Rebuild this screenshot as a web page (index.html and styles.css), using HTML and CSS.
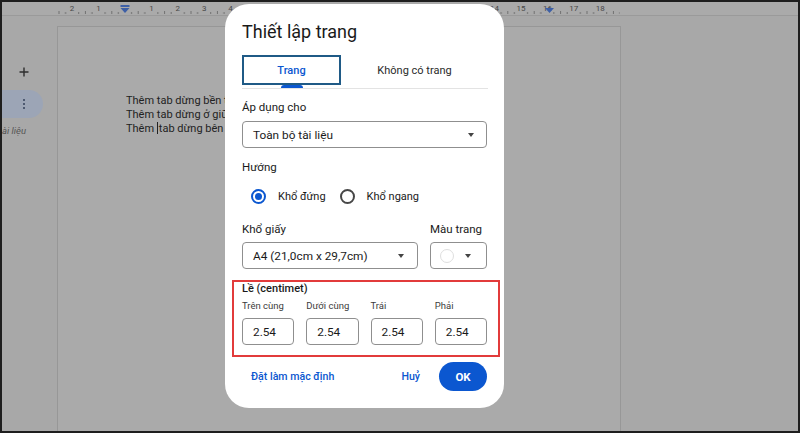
FILE: index.html
```html
<!DOCTYPE html>
<html lang="vi">
<head>
<meta charset="utf-8">
<title>Thiết lập trang</title>
<link rel="stylesheet" href="styles.css">
</head>
<body>
<div class="app">
  <div class="ruler">
    <svg class="ruler-svg" width="796" height="13" viewBox="0 0 796 13">
      <defs>
        <pattern id="tk" x="123" y="0" width="26.4" height="13" patternUnits="userSpaceOnUse">
          <rect x="6.1" y="10" width="0.9" height="2" fill="#6a6a6a"/>
          <rect x="12.7" y="9" width="0.9" height="3" fill="#6a6a6a"/>
          <rect x="19.3" y="10" width="0.9" height="2" fill="#6a6a6a"/>
        </pattern>
      </defs>
      <rect x="56" y="0" width="562" height="13" fill="url(#tk)"/>
      <g class="rnum">
        <text x="70" y="9">2</text>
        <text x="96.6" y="9">1</text>
        <text x="149.4" y="9">1</text>
        <text x="175.8" y="9">2</text>
        <text x="202.2" y="9">3</text>
        <text x="228.6" y="9">4</text>
        <text x="492.6" y="9">14</text>
        <text x="519" y="9">15</text>
        <text x="545.4" y="9">16</text>
        <text x="571.8" y="9">17</text>
        <text x="598.2" y="9">18</text>
      </g>
      <rect x="118.5" y="3" width="9" height="2" fill="#3d5fa6"/>
      <path d="M118.5 6 H127.5 L123 11 Z" fill="#3d5fa6"/>
      <path d="M543 6 H552 L547.5 11 Z" fill="#3d5fa6"/>
    </svg>
  </div>
  <div class="main">
    <aside class="sidebar">
      <svg class="plus" width="10" height="10" viewBox="0 0 10 10">
        <path d="M5 0.5 V9.5 M0.5 5 H9.5" stroke="#2e2e2e" stroke-width="1.4"/>
      </svg>
      <div class="pill">
        <span class="dots"><i></i><i></i><i></i></span>
      </div>
      <div class="side-label">ài liệu</div>
    </aside>
    <section class="page">
      <p class="doc-line">Thêm tab dừng bền trái</p>
      <p class="doc-line">Thêm tab dừng ở giữa</p>
      <p class="doc-line">Thêm <span class="caret-text"></span>tab dừng bên phải</p>
    </section>
  </div>
</div>

<div class="dialog">
  <h1 class="title">Thiết lập trang</h1>
  <div class="tabs">
    <div class="tab tab-active">
      <div class="tab-box">Trang</div>
      <i class="tab-ind"></i>
    </div>
    <div class="tab tab-other">Không có trang</div>
  </div>

  <div class="label l-apply">Áp dụng cho</div>
  <div class="select s-wide">
    <span>Toàn bộ tài liệu</span>
    <i class="caret"></i>
  </div>

  <div class="label l-orient">Hướng</div>
  <div class="radios">
    <span class="radio radio-on"></span>
    <span class="radio-text">Khổ đứng</span>
    <span class="radio radio-off"></span>
    <span class="radio-text">Khổ ngang</span>
  </div>

  <div class="pair-labels">
    <span class="label">Khổ giấy</span>
    <span class="label">Màu trang</span>
  </div>
  <div class="pair-selects">
    <div class="select s-paper">
      <span>A4 (21,0cm x 29,7cm)</span>
      <i class="caret"></i>
    </div>
    <div class="select s-color">
      <i class="swatch"></i>
      <i class="caret"></i>
    </div>
  </div>

  <div class="margins">
    <div class="m-title">Lề (centimet)</div>
    <div class="m-grid">
      <div class="m-col"><span class="m-label">Trên cùng</span><div class="m-input">2.54</div></div>
      <div class="m-col"><span class="m-label">Dưới cùng</span><div class="m-input">2.54</div></div>
      <div class="m-col"><span class="m-label">Trái</span><div class="m-input">2.54</div></div>
      <div class="m-col"><span class="m-label">Phải</span><div class="m-input">2.54</div></div>
    </div>
  </div>

  <div class="actions">
    <span class="btn-text btn-default">Đặt làm mặc định</span>
    <div class="actions-right">
      <span class="btn-text">Huỷ</span>
      <span class="btn-ok">OK</span>
    </div>
  </div>
</div>
</body>
</html>
```

FILE: styles.css
```css
* { box-sizing: border-box; }

html, body {
  margin: 0;
  padding: 0;
}

body {
  width: 800px;
  height: 433px;
  overflow: hidden;
  font-family: Roboto, "Liberation Sans", Arial, sans-serif;
  background: #1e1e1e;
}

.app {
  width: 800px;
  height: 433px;
  border: 2px solid #1e1e1e;
  background: #a8a8a8;
  overflow: hidden;
  display: flex;
  flex-direction: column;
}

.ruler {
  height: 14px;
  flex: none;
  background: #aaaaaa;
  border-bottom: 1px solid #9a9a9a;
}

.ruler-svg {
  display: block;
}

.rnum text {
  font-family: Roboto, "Liberation Sans", sans-serif;
  font-size: 8px;
  fill: #474747;
  text-anchor: middle;
}

.main {
  flex: 1;
  display: flex;
  min-height: 0;
}

.sidebar {
  width: 55px;
  flex: none;
  display: flex;
  flex-direction: column;
}

.plus {
  display: block;
  margin: 51px 0 0 17px;
}

.pill {
  margin-top: 13px;
  width: 41px;
  height: 28px;
  border-radius: 0 14px 14px 0;
  background: #9ca5b6;
  display: flex;
  align-items: center;
}

.dots {
  margin-left: 21px;
  display: flex;
  flex-direction: column;
  gap: 2px;
}

.dots i {
  display: block;
  width: 2px;
  height: 2px;
  border-radius: 1px;
  background: #34425a;
}

.side-label {
  margin-top: 7px;
  font-size: 9.5px;
  font-style: italic;
  color: #555;
  white-space: nowrap;
  line-height: 12px;
}

.page {
  width: 564px;
  flex: none;
  margin-top: 10px;
  border: 1px solid #979797;
  border-bottom: none;
  background: #aaaaaa;
  padding: 67px 0 0 68px;
}

.doc-line {
  margin: 0;
  font-size: 11px;
  line-height: 14px;
  color: #222;
  white-space: nowrap;
}

.caret-text {
  display: inline-block;
  width: 0;
  height: 12px;
  border-left: 1px solid #222;
  vertical-align: -2px;
  margin-right: 1px;
}

/* Dialog */
.dialog {
  position: absolute;
  left: 225px;
  top: 4px;
  width: 279px;
  height: 404px;
  background: #ffffff;
  border-radius: 24px;
  padding: 16px 17px 17px 17px;
  display: flex;
  flex-direction: column;
}

.title {
  margin: 0;
  font-size: 18px;
  font-weight: 400;
  line-height: 24px;
  color: #1a1a1a;
}

.tabs {
  margin-top: 11px;
  display: flex;
  border-bottom: 1px solid #e3e3e3;
  width: 246px;
}

.tab {
  display: flex;
  flex-direction: column;
  align-items: center;
}

.tab-active {
  width: 99px;
}

.tab-box {
  width: 99px;
  height: 30px;
  border: 2px solid #1f5a86;
  display: flex;
  align-items: center;
  justify-content: center;
  font-size: 11px;
  font-weight: 500;
  color: #0b57d0;
}

.tab-ind {
  display: block;
  width: 22px;
  height: 3px;
  border-radius: 3px 3px 0 0;
  background: #0b57d0;
}

.tab-other {
  width: 147px;
  height: 33px;
  padding-bottom: 3px;
  justify-content: center;
  font-size: 11px;
  color: #2a2a2a;
}

.label {
  font-size: 11.5px;
  line-height: 16px;
  color: #1a1a1a;
}

.l-apply {
  margin-top: 10px;
}

.select {
  height: 27px;
  border: 1px solid #8f8f8f;
  border-radius: 4px;
  display: flex;
  align-items: center;
  font-size: 11.8px;
  color: #1a1a1a;
}

.select span {
  padding-left: 10px;
  flex: 1;
}

.caret {
  display: block;
  width: 0;
  height: 0;
  border-left: 3.5px solid transparent;
  border-right: 3.5px solid transparent;
  border-top: 4px solid #444;
}

.s-wide {
  margin-top: 6px;
  width: 245px;
}

.s-wide .caret {
  margin-right: 12px;
}

.l-orient {
  margin-top: 11px;
}

.radios {
  margin-top: 11px;
  height: 20px;
  display: flex;
  align-items: center;
  padding-left: 9px;
}

.radio {
  width: 15px;
  height: 15px;
  border-radius: 50%;
  flex: none;
  display: flex;
  align-items: center;
  justify-content: center;
}

.radio-on {
  border: 2px solid #0b57d0;
}

.radio-on::after {
  content: "";
  width: 7px;
  height: 7px;
  border-radius: 50%;
  background: #0b57d0;
}

.radio-off {
  border: 2px solid #474747;
  margin-left: 14px;
}

.radio-text {
  margin-left: 12px;
  font-size: 11px;
  color: #1a1a1a;
}

.pair-labels {
  margin-top: 15px;
  display: grid;
  grid-template-columns: 176px 57px;
  column-gap: 12px;
}

.pair-selects {
  margin-top: 5px;
  display: grid;
  grid-template-columns: 176px 57px;
  column-gap: 12px;
}

.s-paper .caret {
  margin-right: 13px;
}

.s-color {
  padding-left: 9px;
}

.swatch {
  display: block;
  width: 14px;
  height: 14px;
  border-radius: 50%;
  border: 1px solid #dedede;
  margin-right: 11px;
}

.margins {
  margin: 11px -13px 0 -10px;
  height: 77px;
  border: 2px solid #e23b3b;
  padding: 0 11px 10px 8px;
  display: flex;
  flex-direction: column;
}

.m-title {
  font-size: 11px;
  font-weight: 500;
  line-height: 14px;
  color: #1a1a1a;
}

.m-grid {
  margin-top: 3px;
  display: grid;
  grid-template-columns: repeat(4, 1fr);
  column-gap: 12px;
}

.m-col {
  display: flex;
  flex-direction: column;
}

.m-label {
  font-size: 9.5px;
  line-height: 14px;
  color: #3c3c3c;
}

.m-input {
  margin-top: 5px;
  height: 27px;
  border: 1px solid #8f8f8f;
  border-radius: 4px;
  display: flex;
  align-items: center;
  padding-left: 10px;
  font-size: 11.8px;
  color: #1a1a1a;
}

.actions {
  margin-top: 5px;
  height: 29px;
  display: flex;
  align-items: center;
  justify-content: space-between;
}

.btn-text {
  font-size: 10.6px;
  font-weight: 500;
  color: #0b57d0;
}

.btn-default {
  padding-left: 9px;
}

.actions-right {
  display: flex;
  align-items: center;
  gap: 19px;
}

.btn-ok {
  width: 48px;
  height: 29px;
  border-radius: 15px;
  background: #0b57d0;
  color: #ffffff;
  font-size: 11.5px;
  font-weight: 700;
  display: flex;
  align-items: center;
  justify-content: center;
}
```
